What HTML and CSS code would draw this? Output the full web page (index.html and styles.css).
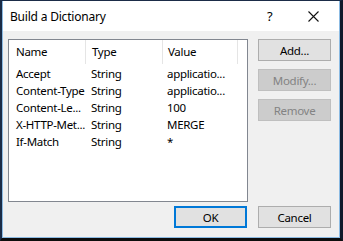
FILE: index.html
```html
<!DOCTYPE html>
<html>
<head>
  <meta charset="utf-8">
  <title>Build a Dictionary</title>
  <link rel="stylesheet" href="styles.css">
</head>
<body>
  <div class="window">
    <div class="frame">
      <div class="titlebar">
        <span class="title">Build a Dictionary</span>
        <span class="help">?</span>
        <span class="close">
          <svg width="11" height="11" viewBox="0 0 11 11">
            <path d="M0.5 0.5 L10.5 10.5 M10.5 0.5 L0.5 10.5" stroke="#111" stroke-width="1.1" fill="none"/>
          </svg>
        </span>
      </div>

      <div class="dialog-body">
        <div class="listbox">
          <div class="row header">
            <div class="cell col-name">Name</div>
            <div class="cell col-type">Type</div>
            <div class="cell col-value">Value</div>
          </div>
          <div class="row">
            <div class="cell col-name">Accept</div>
            <div class="cell col-type">String</div>
            <div class="cell col-value">applicatio...</div>
          </div>
          <div class="row">
            <div class="cell col-name">Content-Type</div>
            <div class="cell col-type">String</div>
            <div class="cell col-value">applicatio...</div>
          </div>
          <div class="row">
            <div class="cell col-name">Content-Le...</div>
            <div class="cell col-type">String</div>
            <div class="cell col-value">100</div>
          </div>
          <div class="row">
            <div class="cell col-name">X-HTTP-Met...</div>
            <div class="cell col-type">String</div>
            <div class="cell col-value">MERGE</div>
          </div>
          <div class="row">
            <div class="cell col-name">If-Match</div>
            <div class="cell col-type">String</div>
            <div class="cell col-value">*</div>
          </div>
        </div>

        <div class="side-buttons">
          <button class="btn">Add...</button>
          <button class="btn" disabled>Modify...</button>
          <button class="btn" disabled>Remove</button>
        </div>
      </div>

      <div class="footer">
        <button class="btn btn-default">OK</button>
        <button class="btn">Cancel</button>
      </div>
    </div>
  </div>
</body>
</html>
```

FILE: styles.css
```css
body {
  margin: 0;
  font-family: "Noto Sans", "Open Sans", sans-serif;
  font-size: 11.5px;
  letter-spacing: -0.3px;
  color: #000;
  background-color: #000;
}

.window {
  width: 343px;
  height: 241px;
  box-sizing: border-box;
  border-top: 1px solid #1b2c47;
  border-left: 2px solid #1b2c47;
  border-right: 3px solid #10192a;
  border-bottom: 3px solid #0d0d0d;
  background-color: #f0f0f0;
}

.frame {
  height: 100%;
  box-sizing: border-box;
  border: 1px solid #8cbbe3;
  border-top: none;
  display: flex;
  flex-direction: column;
}

.titlebar {
  height: 30px;
  background-color: #fff;
  display: flex;
  align-items: center;
  padding-left: 7px;
  flex-shrink: 0;
}

.title {
  flex: 1;
  font-size: 12px;
  letter-spacing: -0.2px;
}

.help {
  width: 12px;
  font-size: 13px;
  margin-right: 29px;
}

.close {
  width: 11px;
  height: 11px;
  margin-right: 20px;
  display: flex;
}

.dialog-body {
  display: flex;
  gap: 10px;
  padding: 8px 8px 0 5px;
}

.listbox {
  width: 240px;
  height: 163px;
  box-sizing: border-box;
  border: 1px solid #828790;
  background-color: #fff;
}

.row {
  display: flex;
  height: 17px;
  align-items: center;
}

.row.header {
  height: 24px;
  margin-bottom: 1px;
}

.cell {
  white-space: nowrap;
  overflow: hidden;
  box-sizing: border-box;
}

.col-name {
  width: 76px;
  padding-left: 7px;
}

.col-type {
  width: 77px;
  padding-left: 6px;
}

.col-value {
  width: 75px;
  padding-left: 5px;
}

.header .cell {
  height: 24px;
  line-height: 24px;
  border-right: 1px solid #e5e5e5;
}

.header .col-name {
  width: 77px;
}

.header .col-type {
  width: 77px;
}

.side-buttons {
  display: flex;
  flex-direction: column;
  gap: 8px;
}

.btn {
  width: 73px;
  height: 22px;
  box-sizing: border-box;
  border: 1px solid #adadad;
  background-color: #e1e1e1;
  font-family: "Noto Sans", "Open Sans", sans-serif;
  font-size: 11.5px;
  letter-spacing: -0.3px;
  color: #000;
  padding: 0;
}

.btn:disabled {
  background-color: #cccccc;
  border-color: #bfbfbf;
  color: #838383;
}

.btn-default {
  border: 2px solid #0078d7;
}

.footer {
  display: flex;
  justify-content: flex-end;
  gap: 11px;
  padding: 4px 8px 0 0;
}
```
